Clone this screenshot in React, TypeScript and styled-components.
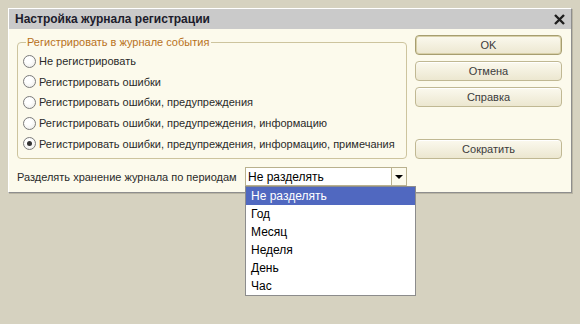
import React from "react";
import styled, { createGlobalStyle } from "styled-components";

const options = [
  "Не регистрировать",
  "Регистрировать ошибки",
  "Регистрировать ошибки, предупреждения",
  "Регистрировать ошибки, предупреждения, информацию",
  "Регистрировать ошибки, предупреждения, информацию, примечания",
];

const periods = ["Не разделять", "Год", "Месяц", "Неделя", "День", "Час"];

const GlobalStyle = createGlobalStyle`
  html, body {
    margin: 0;
    padding: 0;
    background: #d6d2c0;
  }
  body {
    font-family: "Liberation Sans", Arial, sans-serif;
  }
`;

const Page = styled.div`
  width: 580px;
  height: 324px;
  padding: 8px;
  box-sizing: border-box;
`;

const Window = styled.div`
  width: 564px;
  height: 185px;
  box-sizing: border-box;
  display: flex;
  flex-direction: column;
  background: #fcfaec;
  border: 1px solid;
  border-color: #ffffff #8e8e8e #8e8e8e #ffffff;
  box-shadow: 1px 1px 0 #b9b5a4;
`;

const TitleBar = styled.div`
  height: 20px;
  flex: none;
  display: flex;
  align-items: center;
  justify-content: space-between;
  padding: 0 6px 0 6px;
  background: #cacaca;
  color: #1c1c2c;
  font-size: 12px;
  font-weight: bold;
`;

const CloseIcon = () => (
  <svg width="11" height="11" viewBox="0 0 11 11">
    <path d="M1 1 L10 10 M10 1 L1 10" stroke="#1e1e1e" strokeWidth="2.4" />
  </svg>
);

const Body = styled.div`
  flex: 1;
  display: flex;
  gap: 8px;
  padding: 6px 9px 0 8px;
`;

const LeftColumn = styled.div`
  width: 390px;
  display: flex;
  flex-direction: column;
  gap: 8px;
`;

const Group = styled.fieldset`
  margin: 0;
  height: 124px;
  box-sizing: border-box;
  padding: 2px 6px 0 5px;
  border: 1px solid #cdc49e;
  border-radius: 4px;
  display: flex;
  flex-direction: column;
`;

const Legend = styled.legend`
  margin-left: 3px;
  padding: 0 2px 0 1px;
  font-size: 11px;
  line-height: 14px;
  color: #b8721c;
`;

const RadioRow = styled.label`
  height: 20.6px;
  display: flex;
  align-items: center;
  gap: 3px;
  font-size: 11px;
  color: #2a2a2a;
  white-space: nowrap;
`;

const RadioCircle = styled.span<{ $checked?: boolean }>`
  width: 13px;
  height: 13px;
  box-sizing: border-box;
  border-radius: 50%;
  border: 1px solid #7b7b7b;
  background: radial-gradient(circle at 40% 35%, #ffffff 30%, #e9e9e4 100%);
  display: flex;
  align-items: center;
  justify-content: center;
  &::after {
    content: "";
    display: ${(p) => (p.$checked ? "block" : "none")};
    width: 5px;
    height: 5px;
    border-radius: 50%;
    background: #333333;
  }
`;

const PeriodRow = styled.div`
  display: flex;
  align-items: center;
  justify-content: space-between;
  font-size: 11px;
  color: #2a2a2a;
  white-space: nowrap;
`;

const Combo = styled.div`
  position: relative;
  width: 162px;
  height: 19px;
  box-sizing: border-box;
  display: flex;
  border: 1px solid #b9b18e;
  background: #ffffff;
`;

const ComboValue = styled.div`
  flex: 1;
  display: flex;
  align-items: center;
  padding-left: 2px;
  font-size: 12px;
  color: #000000;
`;

const ArrowButton = styled.div`
  width: 14px;
  display: flex;
  align-items: center;
  justify-content: center;
  border-left: 1px solid #b9b18e;
  background: #fcfaec;
  &::after {
    content: "";
    border-left: 4px solid transparent;
    border-right: 4px solid transparent;
    border-top: 4px solid #000000;
    margin-top: 1px;
  }
`;

const DropList = styled.ul`
  position: absolute;
  top: 18px;
  left: -1px;
  width: 171px;
  margin: 0;
  padding: 0;
  list-style: none;
  box-sizing: border-box;
  border: 1px solid #8c8c8c;
  background: #ffffff;
  z-index: 2;
`;

const DropItem = styled.li<{ $selected?: boolean }>`
  height: 18px;
  display: flex;
  align-items: center;
  padding-left: 5px;
  font-size: 12px;
  color: ${(p) => (p.$selected ? "#ffffff" : "#000000")};
  background: ${(p) => (p.$selected ? "#5068c0" : "transparent")};
`;

const RightColumn = styled.div`
  width: 147px;
  display: flex;
  flex-direction: column;
  gap: 6px;
`;

const Button = styled.button<{ $primary?: boolean; $push?: number }>`
  height: 20px;
  margin: ${(p) => (p.$push ? `${p.$push}px 0 0 0` : "0")};
  padding: 0;
  box-sizing: border-box;
  border: 1px solid ${(p) => (p.$primary ? "#a79e70" : "#c0b893")};
  border-radius: 4px;
  background: linear-gradient(#fbf9ee, #ece7d0);
  box-shadow: ${(p) =>
    p.$primary ? "inset 0 0 0 1px #d8d0a8" : "inset 0 1px 0 #ffffff"};
  font-family: "Liberation Sans", Arial, sans-serif;
  font-size: 11px;
  color: #3c3c3c;
`;

export default function App() {
  return (
    <Page>
      <GlobalStyle />
      <Window>
        <TitleBar>
          <span>Настройка журнала регистрации</span>
          <CloseIcon />
        </TitleBar>
        <Body>
          <LeftColumn>
            <Group>
              <Legend>Регистрировать в журнале события</Legend>
              {options.map((o, i) => (
                <RadioRow key={o}>
                  <RadioCircle $checked={i === options.length - 1} />
                  {o}
                </RadioRow>
              ))}
            </Group>
            <PeriodRow>
              <span>Разделять хранение журнала по периодам</span>
              <Combo>
                <ComboValue>Не разделять</ComboValue>
                <ArrowButton />
                <DropList>
                  {periods.map((p, i) => (
                    <DropItem key={p} $selected={i === 0}>
                      {p}
                    </DropItem>
                  ))}
                </DropList>
              </Combo>
            </PeriodRow>
          </LeftColumn>
          <RightColumn>
            <Button $primary>OK</Button>
            <Button>Отмена</Button>
            <Button>Справка</Button>
            <Button $push={26}>Сократить</Button>
          </RightColumn>
        </Body>
      </Window>
    </Page>
  );
}
